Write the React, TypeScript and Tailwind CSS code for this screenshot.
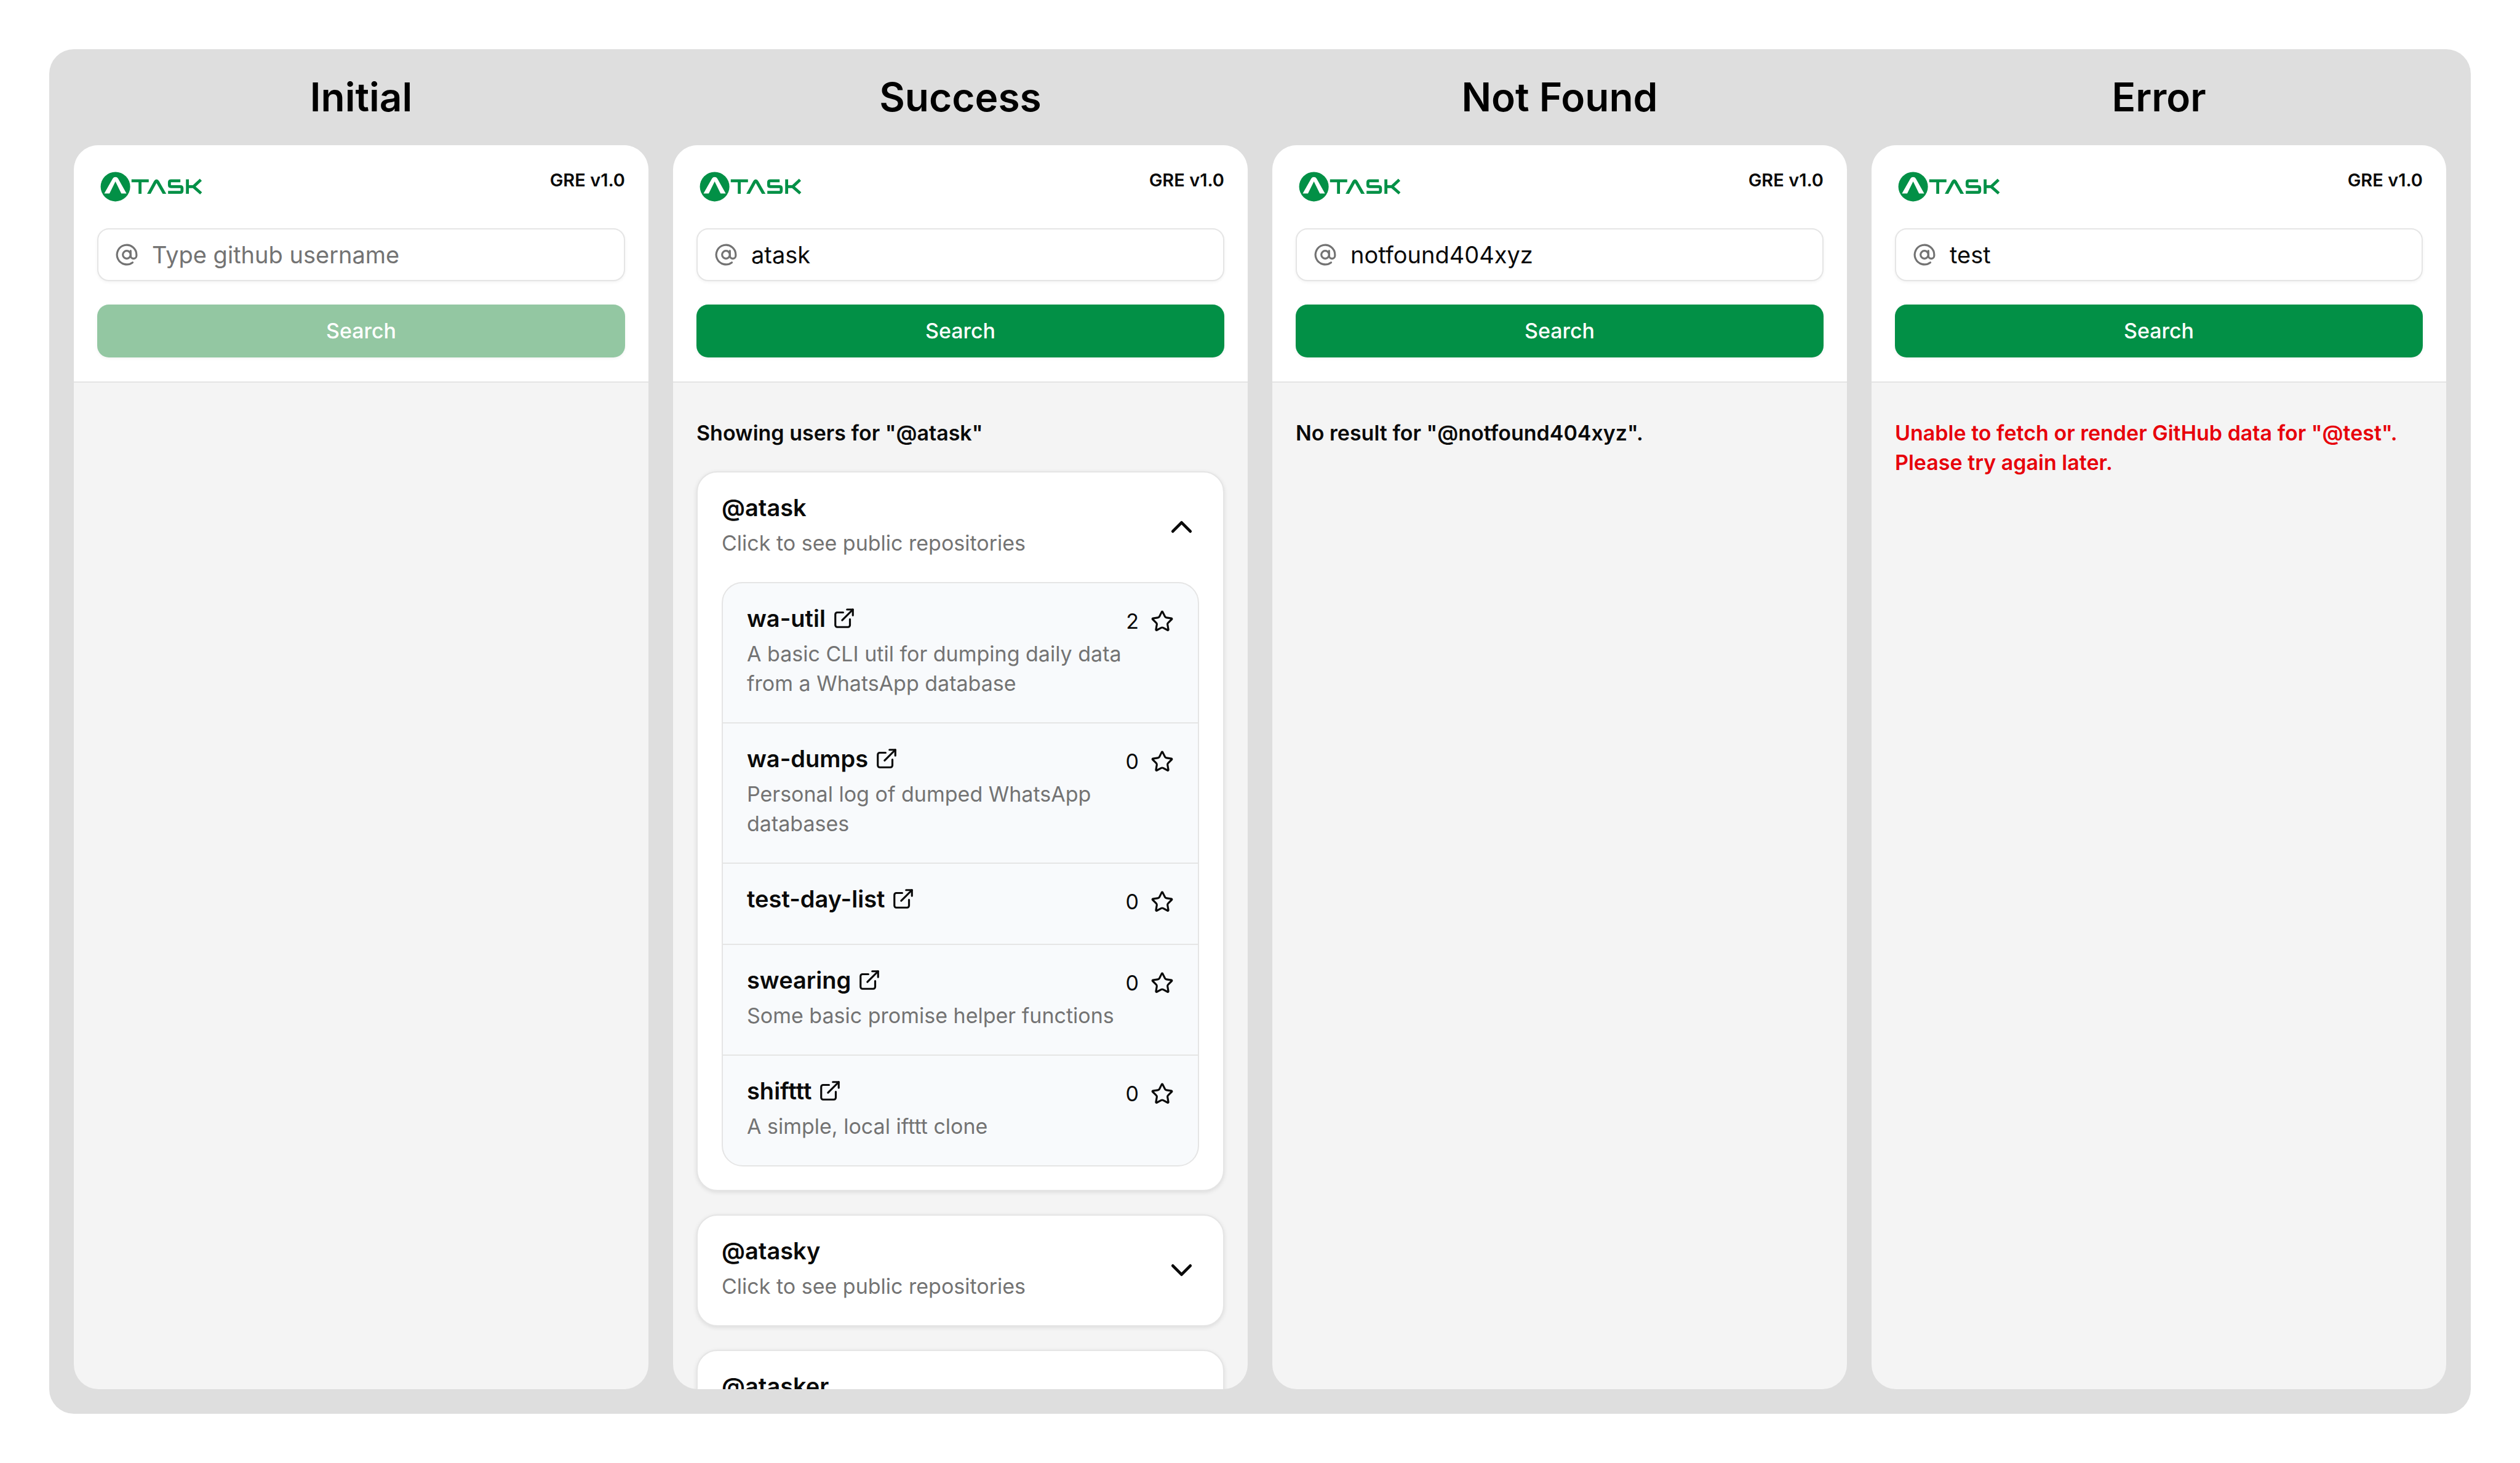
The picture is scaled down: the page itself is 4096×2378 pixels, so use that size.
import { useState, type FormEvent } from "react";
import { AtSign, ChevronDown, ChevronUp, ExternalLink, Star } from "lucide-react";

type Repo = { name: string; description?: string; stars: number };
type User = { login: string; repos: Repo[] };

const users: User[] = [
  {
    login: "atask",
    repos: [
      {
        name: "wa-util",
        description: "A basic CLI util for dumping daily data from a WhatsApp database",
        stars: 2,
      },
      { name: "wa-dumps", description: "Personal log of dumped WhatsApp databases", stars: 0 },
      { name: "test-day-list", stars: 0 },
      { name: "swearing", description: "Some basic promise helper functions", stars: 0 },
      { name: "shifttt", description: "A simple, local ifttt clone", stars: 0 },
    ],
  },
  { login: "atasky", repos: [] },
  { login: "atasker", repos: [] },
];

function Logo() {
  return (
    <svg viewBox="0 0 220 72" className="h-[58px] w-[176px]" role="img" aria-label="Atask">
      <circle cx="37" cy="36.5" r="30" fill="#029046" />
      <path
        d="M14.3 50.5 L31.5 20 Q33.5 17 37 17 Q40.5 17 42.5 20 L59.5 50.5 H49 L37 26 L25 50.5 Z"
        fill="#fff"
      />
      <path
        d="M101.3 51 L115.5 25 Q117.5 21.7 120.5 21.7 Q123.5 21.7 125.5 25 L140.3 51 H133 L120.5 29 L108.5 51 Z"
        fill="#029046"
      />
      <g fill="none" stroke="#029046" strokeWidth="6">
        <path d="M69.7 24.7 H104.7 M87 24.7 V51" />
        <path d="M169 24.7 H150 Q146.7 24.7 146.7 28 V33 Q146.7 36.5 150 36.5 H169 Q172.3 36.5 172.3 40 V44.7 Q172.3 48 169 48 H144" />
        <path d="M183.3 21.7 V51 M183.3 36.5 H195 M210.500 22.5 L195.5 36.5 L211 50" />
      </g>
    </svg>
  );
}

function SearchHeader({ id, initial }: { id: string; initial: string }) {
  const [value, setValue] = useState(initial);
  const submit = (event: FormEvent) => event.preventDefault();

  return (
    <header className="flex flex-col gap-[39px] border-b-2 border-[#e4e4e4] bg-white px-[38px] pt-[38px] pb-[39px]">
      <div className="flex items-start justify-between">
        <Logo />
        <span className="text-[29px] leading-[38px] font-semibold">GRE v1.0</span>
      </div>
      <form onSubmit={submit} className="flex flex-col gap-[38px]">
        <label
          htmlFor={id}
          className="flex h-[86px] items-center gap-[22px] rounded-[19px] border-2 border-[#e5e5e5] bg-white pr-[27px] pl-[27px] shadow-[0_2px_5px_rgba(0,0,0,0.05)]"
        >
          <AtSign className="size-[38px] shrink-0 text-[#737373]" aria-label="GitHub username" />
          <input
            id={id}
            type="text"
            value={value}
            placeholder="Type github username"
            onChange={(event) => setValue(event.target.value)}
            className="min-w-0 flex-1 bg-transparent text-[38px] leading-[57px] outline-none placeholder:text-[#737373]"
          />
        </label>
        <button
          type="submit"
          disabled={!value}
          className="h-[86px] rounded-[19px] bg-[#029046] text-[34px] leading-[48px] font-medium text-white shadow-[0_2px_5px_rgba(0,0,0,0.05)] disabled:bg-[#93c7a2]"
        >
          Search
        </button>
      </form>
    </header>
  );
}

function RepoItem({ repo }: { repo: Repo }) {
  return (
    <li className="flex items-start justify-between px-[39px] py-[38px]">
      <div className="flex min-w-0 flex-col gap-[15px] pb-px">
        <a
          href={`https://github.com/atask/${repo.name}`}
          className="flex items-center gap-[11px] text-[38px] leading-[38px] font-semibold"
        >
          {repo.name}
          <ExternalLink className="size-[38px] shrink-0" aria-hidden />
        </a>
        <p className="text-[34px] leading-[48px] text-[#737373]">{repo.description}</p>
      </div>
      <div className="flex shrink-0 items-center gap-[19px] text-[34px] leading-[48px]">
        {repo.stars}
        <Star className="size-[38px]" aria-label="stars" />
      </div>
    </li>
  );
}

function UserCard({ user, defaultOpen }: { user: User; defaultOpen: boolean }) {
  const [open, setOpen] = useState(defaultOpen);
  const Chevron = open ? ChevronUp : ChevronDown;

  return (
    <article className="shrink-0 rounded-[34px] border-2 border-[#e5e5e5] bg-white shadow-[0_2px_7px_rgba(0,0,0,0.1)]">
      <button
        type="button"
        aria-expanded={open}
        onClick={() => setOpen(!open)}
        className="flex w-full items-center justify-between px-[39px] pt-[38px] pb-[39px] text-left"
      >
        <span className="flex flex-col gap-[15px]">
          <span className="text-[38px] leading-[38px] font-semibold">@{user.login}</span>
          <span className="text-[34px] leading-[48px] text-[#737373]">
            Click to see public repositories
          </span>
        </span>
        <Chevron className="size-[57px]" aria-hidden />
      </button>
      {open && (
        <div className="px-[39px] pb-[38px]">
          <ul className="divide-y-2 divide-[#e5e5e5] rounded-[34px] border-2 border-[#e5e5e5] bg-[#f8fafc]">
            {user.repos.map((repo) => (
              <RepoItem key={repo.name} repo={repo} />
            ))}
          </ul>
        </div>
      )}
    </article>
  );
}

function Results() {
  return (
    <>
      <h3 className="text-[34px] leading-[48px] font-semibold">Showing users for "@atask"</h3>
      {users.map((user, index) => (
        <UserCard key={user.login} user={user} defaultOpen={index === 0} />
      ))}
    </>
  );
}

const screens = [
  { title: "Initial", query: "", body: null },
  { title: "Success", query: "atask", body: <Results /> },
  {
    title: "Not Found",
    query: "notfound404xyz",
    body: (
      <p className="text-[34px] leading-[48px] font-semibold">
        No result for "@notfound404xyz".
      </p>
    ),
  },
  {
    title: "Error",
    query: "test",
    body: (
      <p role="alert" className="text-[34px] leading-[48px] font-semibold text-[#e7000b]">
        Unable to fetch or render GitHub data for "@test". Please try again later.
      </p>
    ),
  },
];

export default function App() {
  return (
    <div className="h-screen bg-white p-20 font-['Inter',sans-serif] text-[#0a0a0a]">
      <main className="grid h-full grid-cols-4 gap-10 rounded-[40px] bg-[#dedede] px-10 pb-10">
        {screens.map((screen, index) => (
          <section key={screen.title} className="flex min-h-0 min-w-0 flex-col">
            <h2 className="py-10 text-center text-[64px] leading-[76px] font-semibold text-black">
              {screen.title}
            </h2>
            <div className="flex min-h-0 flex-1 flex-col overflow-hidden rounded-[40px] bg-[#f4f4f4]">
              <SearchHeader id={`username-${index}`} initial={screen.query} />
              <div className="flex min-h-0 flex-1 flex-col gap-[38px] overflow-hidden px-[38px] pt-[58px]">
                {screen.body}
              </div>
            </div>
          </section>
        ))}
      </main>
    </div>
  );
}
